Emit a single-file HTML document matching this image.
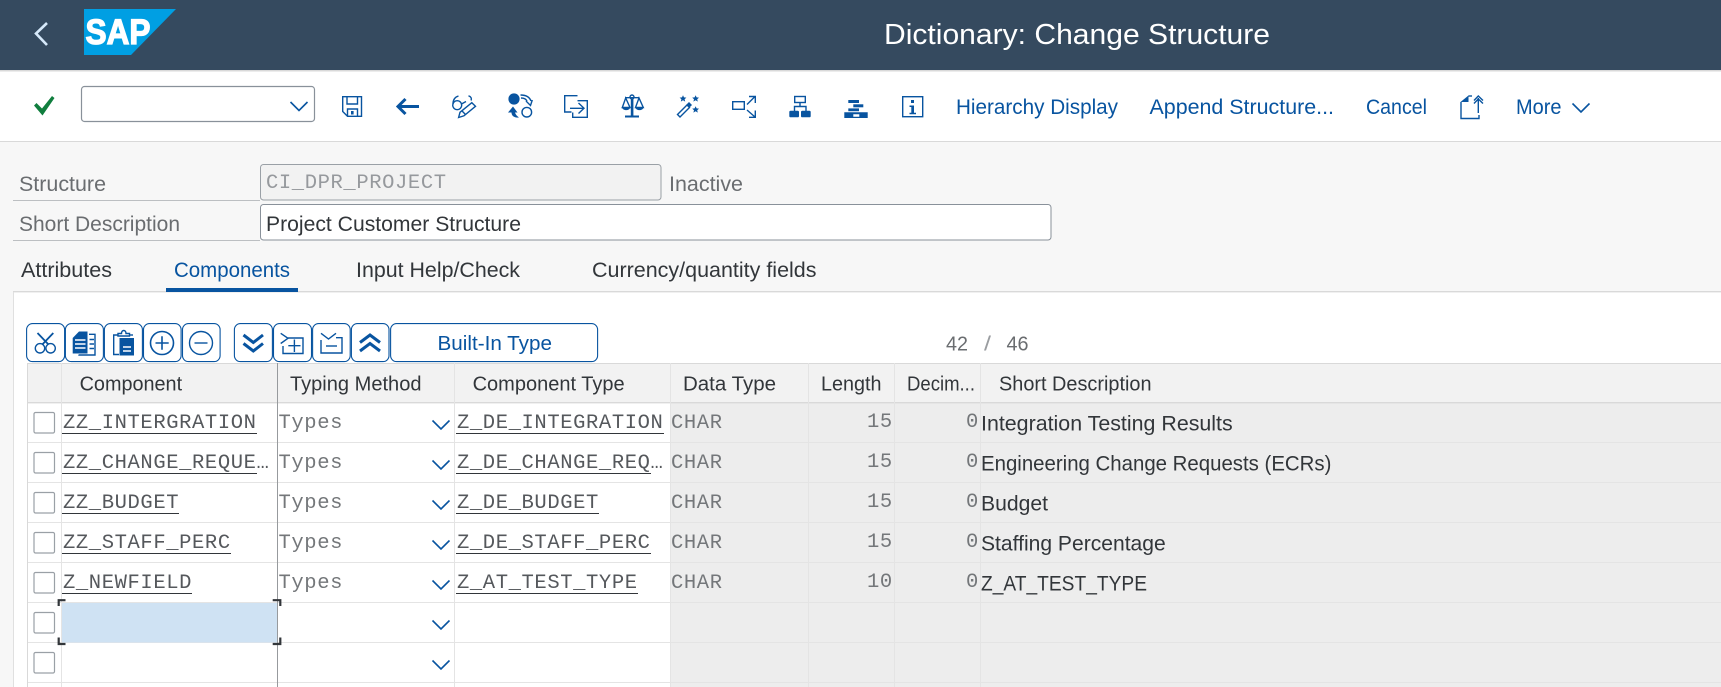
<!DOCTYPE html>
<html lang="en"><head><meta charset="utf-8"><title>Dictionary: Change Structure</title>
<style>
html,body{margin:0;padding:0;background:#f7f7f7;width:1721px;height:687px;overflow:hidden}
svg{display:block}
text{font-family:"Liberation Sans",sans-serif;font-size:21px;fill:#32363a;white-space:pre}
.m{font-family:"Liberation Mono",monospace;font-size:20.5px;letter-spacing:.6px;fill:#55585c}
.g{fill:#6a6d70}
.n{fill:#74777a}
.b{fill:#0854a0}
.h{font-size:20.5px}
.i{fill:none;stroke:#0854a0;stroke-width:1.4}
.f{fill:#0854a0}
.c{fill:none;stroke:#0854a0;stroke-width:1.6}
.k{fill:#fff;stroke:#9aa0a6;stroke-width:1.2}
.u{fill:#32363a}
</style></head><body>
<svg width="1721" height="687" viewBox="0 0 1721 687" xmlns="http://www.w3.org/2000/svg">
<rect width="1721" height="687" fill="#f7f7f7"/>
<!-- shell -->
<rect width="1721" height="70" fill="#354a5f"/>
<rect y="70" width="1721" height="1.5" fill="#d9d9d9"/>
<path d="M47 23L36 33.5L47 45" fill="none" stroke="#d6e9fa" stroke-width="2.6"/>
<polygon points="84,9 176,9 131,55 84,55" fill="#009fe3"/>
<text x="85.5" y="44" style="font-size:35px;font-weight:bold;fill:#fff;stroke:#fff;stroke-width:1.3" textLength="65" lengthAdjust="spacingAndGlyphs">SAP</text>
<text x="884" y="44" style="font-size:28.5px;fill:#fff" textLength="386" lengthAdjust="spacingAndGlyphs">Dictionary: Change Structure</text>
<!-- toolbar -->
<rect y="71.5" width="1721" height="69.5" fill="#fff"/>
<rect y="141" width="1721" height="1" fill="#d9d9d9"/>
<path d="M34 105.5L36.5 103L42 108.5L52 96L54.5 98L42.5 115.5Z" fill="#107e3e"/>
<rect x="81.5" y="86.5" width="233" height="35" rx="3" fill="#fff" stroke="#89919a" stroke-width="1.2"/>
<path d="M290.5 102L299 110.5L307.5 102" class="c"/>
<!-- save -->
<path class="i" d="M342.7 96.7H361.5V116.3H347.5L342.7 111.5Z"/>
<path class="i" d="M347 97V104H357.5V97M347.5 116V109H357.5V116"/>
<rect x="351" y="111" width="2.6" height="3.5" class="f"/>
<!-- back -->
<path d="M398 106.5H419M405.5 99L398 106.5L405.5 114" fill="none" stroke="#0854a0" stroke-width="3"/>
<!-- glasses pencil -->
<circle cx="457.2" cy="105.2" r="4.5" class="i"/><path class="i" d="M453 104C453 99.5 455 97 458.5 96M461.5 104L466 101.5M471 100.5C472 98.5 471 96.5 468.5 95.8"/>
<path class="i" d="M458.6 117.5L460 112.3L471.8 102.7L475.5 106.3L464 115.8Z"/><path class="i" d="M461.8 110.8L465.5 114.5"/>
<!-- swap -->
<circle cx="514" cy="99" r="5.6" class="f"/>
<path class="i" d="M520.5 95C526 95 529.5 97 531 101M526 101L530.5 105.5L532.3 100M521 98C524 98 526 99 527 101"/>
<circle cx="526.8" cy="112.2" r="4.8" class="i"/>
<path class="f" d="M508 112.5L513 106.5L517.5 112.5L515 112.5C515.5 114.5 517 116 519 117.5C514.5 118 511.5 116 511.5 112.5Z"/>
<!-- doc arrow -->
<path class="i" d="M577.5 95.7H564.7V112H571.5M572.7 112.5V117.3H587.3V100.7H577.5"/>
<path class="i" stroke-width="1.6" d="M570 108.3H583.5M578.5 103L584 108.3L578.5 113.5"/>
<!-- scales -->
<circle cx="632" cy="97" r="2" class="i"/>
<rect x="630.8" y="99" width="2.6" height="17" class="f"/><rect x="625" y="115.5" width="14" height="2" class="f"/>
<path class="i" d="M625 97.7H639M625.7 98L622.3 107.5H630ZM639 98L635.5 107.5H643.3Z"/>
<path class="f" d="M622 107.5H630.2C629.5 111 623 111 622 107.5ZM635.3 107.5H643.5C642.8 111 636.3 111 635.3 107.5Z"/>
<!-- wand -->
<path class="f" d="M683 95.2l1 2.2 2.4.2-1.8 1.6.6 2.4-2.2-1.3-2.2 1.3.6-2.4-1.8-1.6 2.4-.2ZM695.6 95.2l1 2.2 2.4.2-1.8 1.6.6 2.4-2.2-1.3-2.2 1.3.6-2.4-1.8-1.6 2.4-.2ZM695.6 106.2l1 2.2 2.4.2-1.8 1.6.6 2.4-2.2-1.3-2.2 1.3.6-2.4-1.8-1.6 2.4-.2Z"/>
<path class="i" d="M677.5 114.5L687 105L689.5 107.5L680 117Z"/>
<path class="f" d="M686.5 104.5L689 102L692 105L689.5 107.5Z"/>
<!-- shuffle -->
<rect x="732.7" y="101.7" width="11.6" height="7.6" class="i"/>
<path class="i" d="M747 104.5L755 96.5M749 96.5H755.3V103M747 110L755 117M755.3 110.5V117.3H749" stroke-width="1.5"/>
<!-- hierarchy -->
<rect x="794.7" y="96.5" width="10.6" height="6" class="i"/>
<path class="i" d="M800 102.5V106.5M794.5 111V106.5H806V111"/>
<rect x="789.3" y="110.7" width="9.7" height="6.6" rx="1.3" class="f"/><rect x="801" y="110.7" width="9.7" height="6.6" rx="1.3" class="f"/>
<!-- stack -->
<rect x="848.3" y="100" width="10.7" height="3" class="f"/><rect x="853.3" y="104.3" width="10" height="3" class="f"/><rect x="848.3" y="108.4" width="10.7" height="2.8" class="f"/>
<path class="f" fill-rule="evenodd" d="M844.3 112.3H867.7V118H844.3ZM853.3 114.3V116.8H859.3V114.3Z"/>
<!-- info -->
<rect x="902.7" y="96.7" width="20" height="20" class="i"/>
<rect x="911" y="100" width="3" height="3" class="f"/><path class="f" d="M909.5 105.5H914V112.8H916V114.3H909.5V112.8H911.3V107H909.5Z"/>
<text x="956" y="114" class="b" textLength="162" lengthAdjust="spacingAndGlyphs">Hierarchy Display</text>
<text x="1149.5" y="114" class="b" textLength="184.5" lengthAdjust="spacingAndGlyphs">Append Structure...</text>
<text x="1366" y="114" class="b" textLength="61" lengthAdjust="spacingAndGlyphs">Cancel</text>
<!-- upload -->
<path class="i" d="M1461 102V118.5H1479V115"/><path class="f" d="M1460.5 102L1468.5 95.5V102Z"/><path class="i" d="M1468.5 96H1472"/>
<path class="i" d="M1478.3 98V113M1474 100.5L1478.3 96L1483 100.5M1474 103.5L1478.3 99L1483 103.5"/>
<text x="1516" y="114" class="b" textLength="45.5" lengthAdjust="spacingAndGlyphs">More</text>
<path d="M1572.5 103.5L1581 112L1589.5 103.5" class="c"/>
<!-- form -->
<text x="19" y="191" class="g" textLength="87" lengthAdjust="spacingAndGlyphs">Structure</text>
<rect x="13" y="200" width="247" height="1" fill="#bcbfc2"/>
<rect x="260.5" y="164.5" width="400.5" height="35.5" rx="3" fill="#f2f2f2" stroke="#9aa0a6"/>
<text x="266" y="188" class="m" style="fill:#96999d">CI_DPR_PROJECT</text>
<text x="669" y="191" class="g" textLength="74" lengthAdjust="spacingAndGlyphs">Inactive</text>
<text x="19" y="231" class="g" textLength="161" lengthAdjust="spacingAndGlyphs">Short Description</text>
<rect x="13" y="240" width="247" height="1" fill="#bcbfc2"/>
<rect x="260.5" y="204.5" width="790.5" height="35.5" rx="3" fill="#fff" stroke="#89919a"/>
<text x="266" y="231" textLength="255" lengthAdjust="spacingAndGlyphs">Project Customer Structure</text>
<!-- tabs -->
<text x="21" y="277" textLength="91" lengthAdjust="spacingAndGlyphs">Attributes</text>
<text x="174" y="277" class="b" textLength="116" lengthAdjust="spacingAndGlyphs">Components</text>
<text x="356" y="277" textLength="164" lengthAdjust="spacingAndGlyphs">Input Help/Check</text>
<text x="592" y="277" textLength="224.5" lengthAdjust="spacingAndGlyphs">Currency/quantity fields</text>
<rect x="13" y="292" width="1708" height="395" fill="#fff"/>
<rect x="13" y="291" width="1708" height="1.4" fill="#d9d9d9"/>
<rect x="13" y="292" width="1" height="395" fill="#e0e0e0"/>
<rect x="166" y="288" width="132" height="4" fill="#0854a0"/>
<!-- table buttons -->
<g fill="#fff" stroke="#0854a0" stroke-width="1.1">
<rect x="26.6" y="323.6" width="38" height="38" rx="6"/><rect x="65.4" y="323.6" width="38" height="38" rx="6"/><rect x="104.4" y="323.6" width="38" height="38" rx="6"/><rect x="143.5" y="323.6" width="37.6" height="38" rx="6"/><rect x="182.5" y="323.6" width="37.6" height="38" rx="6"/>
<rect x="234.4" y="323.6" width="38" height="38" rx="6"/><rect x="273.5" y="323.6" width="38" height="38" rx="6"/><rect x="312.6" y="323.6" width="37.6" height="38" rx="6"/><rect x="351.4" y="323.6" width="37.6" height="38" rx="6"/><rect x="390.6" y="323.6" width="207" height="38" rx="6"/>
</g>
<!-- scissors -->
<circle cx="40" cy="348.3" r="4.7" class="i"/><circle cx="50.6" cy="348.3" r="4.7" class="i"/>
<path d="M37.5 333L48.5 344.5M53.3 333L42.3 344.5" fill="none" stroke="#0854a0" stroke-width="1.8"/>
<!-- copy -->
<path class="f" d="M72.7 338L79 331.5H87.5V353.5H72.7Z"/><path d="M75 340H85.5M75 344H85.5M75 348H85.5" stroke="#fff" stroke-width="1.6"/>
<path class="i" d="M89 334.3H95V355H79V354.5" stroke-width="1.3"/><path d="M89.5 339.5H94M89.5 344H94M89.5 348.5H94" stroke="#0854a0" stroke-width="1.5"/>
<!-- paste -->
<path class="i" d="M118 335H113.7V354.5H119"/><path class="i" d="M118 336V333.5H121.5C121.5 329.5 126 329.5 126 333.5H129.5V336H118Z"/>
<path class="i" d="M130 335H133"/><path class="f" d="M119.5 338H134V355.5H119.5Z"/><path d="M123 347H131M123 351H131" stroke="#fff" stroke-width="1.5"/>
<!-- plus / minus -->
<circle cx="162" cy="343" r="11.5" class="c"/><path class="c" d="M155.5 343H168.7M162 336.3V349.7"/>
<circle cx="201" cy="343" r="11.5" class="i"/><path class="i" d="M194.5 343H207.5"/>
<!-- double down -->
<path d="M243.5 335L253.3 342.5L263 335M243.5 343.5L253.3 351L263 343.5" fill="none" stroke="#0854a0" stroke-width="3"/>
<!-- add block -->
<path class="i" d="M280.7 333.3L288 338.3L280.7 343.5"/><path class="i" d="M288 338H303V353.5H283V346"/><path class="i" d="M288.3 345.7H300.5M294.4 339.5V352"/>
<!-- select block -->
<path class="i" d="M321 333.3L328.5 339L336 333.3"/><path class="i" d="M321 340V353H342V337.7H336"/><path class="i" d="M326 346H337"/>
<!-- double up -->
<path d="M360 342.5L370 335L380 342.5M360 351L370 343.5L380 351" fill="none" stroke="#0854a0" stroke-width="3"/>
<text x="437.5" y="350" class="b" style="font-size:20px" textLength="114.5" lengthAdjust="spacingAndGlyphs">Built-In Type</text>
<text x="946" y="350.5" class="g" style="font-size:20px" textLength="22" lengthAdjust="spacingAndGlyphs">42</text>
<text x="984" y="350.5" style="font-size:20px;fill:#9a9da0" textLength="7" lengthAdjust="spacingAndGlyphs">/</text>
<text x="1006.5" y="350.5" class="g" style="font-size:20px" textLength="22" lengthAdjust="spacingAndGlyphs">46</text>
<!-- table grid -->
<rect x="27" y="363" width="1694" height="39" fill="#f2f2f2"/>
<rect x="670" y="402" width="1051" height="285" fill="#ededed"/>
<rect x="27" y="363" width="1694" height="1" fill="#d9d9d9"/>
<g fill="#e4e4e4">
<rect x="27" y="402" width="1694" height="1.4" fill="#d9d9d9"/>
<rect x="27" y="442" width="1694" height="1"/><rect x="27" y="482" width="1694" height="1"/><rect x="27" y="522" width="1694" height="1"/><rect x="27" y="562" width="1694" height="1"/><rect x="27" y="602" width="1694" height="1"/><rect x="27" y="642" width="1694" height="1"/><rect x="27" y="682" width="1694" height="1"/>
<rect x="27" y="363" width="1" height="324" fill="#d9d9d9"/><rect x="61" y="363" width="1" height="324"/><rect x="454" y="363" width="1" height="324"/><rect x="670" y="363" width="1" height="324"/><rect x="808" y="363" width="1" height="324"/><rect x="894" y="363" width="1" height="324"/><rect x="980" y="363" width="1" height="324"/>
</g>
<rect x="62" y="603" width="215.5" height="39.5" fill="#cfe2f3"/>
<rect x="277" y="363" width="1" height="324" fill="#979a9d"/>
<path d="M65.5 600.2H58.7V606M272.7 600.2H280.3V606M58.7 637.5V644H65.5M280.3 637.5V644H272.7" fill="none" stroke="#32363a" stroke-width="2.2"/>
<!-- headers -->
<text x="79.6" y="390.5" class="h" textLength="102.5" lengthAdjust="spacingAndGlyphs">Component</text>
<text x="290" y="390.5" class="h" textLength="131.5" lengthAdjust="spacingAndGlyphs">Typing Method</text>
<text x="472.6" y="390.5" class="h" textLength="152" lengthAdjust="spacingAndGlyphs">Component Type</text>
<text x="683" y="390.5" class="h" textLength="93" lengthAdjust="spacingAndGlyphs">Data Type</text>
<text x="821" y="390.5" class="h" textLength="60.5" lengthAdjust="spacingAndGlyphs">Length</text>
<text x="907" y="390.5" class="h" textLength="68" lengthAdjust="spacingAndGlyphs">Decim...</text>
<text x="999" y="390.5" class="h" textLength="152.5" lengthAdjust="spacingAndGlyphs">Short Description</text>
<!-- checkboxes -->
<rect class="k" x="34" y="412.5" width="20.5" height="20.5" rx="1.5"/><rect class="k" x="34" y="452.5" width="20.5" height="20.5" rx="1.5"/><rect class="k" x="34" y="492.5" width="20.5" height="20.5" rx="1.5"/><rect class="k" x="34" y="532.5" width="20.5" height="20.5" rx="1.5"/><rect class="k" x="34" y="572.5" width="20.5" height="20.5" rx="1.5"/><rect class="k" x="34" y="612.5" width="20.5" height="20.5" rx="1.5"/><rect class="k" x="34" y="652.5" width="20.5" height="20.5" rx="1.5"/>
<!-- chevrons -->
<path class="c" d="M432.5 420.5L441 429L449.5 420.5M432.5 460.5L441 469L449.5 460.5M432.5 500.5L441 509L449.5 500.5M432.5 540.5L441 549L449.5 540.5M432.5 580.5L441 589L449.5 580.5M432.5 620.5L441 629L449.5 620.5M432.5 660.5L441 669L449.5 660.5"/>
<!-- row 1 -->
<rect class="u" x="62" y="433" width="195" height="1"/><rect class="u" x="456" y="433" width="208" height="1"/>
<text x="63" y="428" class="m">ZZ_INTERGRATION</text><text x="278.5" y="428" class="m n">Types</text><text x="457" y="428" class="m">Z_DE_INTEGRATION</text><text x="671" y="428" class="m n">CHAR</text><text x="867" y="427" class="m n">15</text><text x="966" y="427" class="m n">0</text>
<text x="981" y="430.5" textLength="251.7" lengthAdjust="spacingAndGlyphs">Integration Testing Results</text>
<!-- row 2 -->
<rect class="u" x="62" y="473" width="195" height="1"/><rect class="u" x="456" y="473" width="195" height="1"/>
<text x="63" y="468" class="m">ZZ_CHANGE_REQUE…</text><text x="278.5" y="468" class="m n">Types</text><text x="457" y="468" class="m">Z_DE_CHANGE_REQ…</text><text x="671" y="468" class="m n">CHAR</text><text x="867" y="467" class="m n">15</text><text x="966" y="467" class="m n">0</text>
<text x="981" y="470.5" textLength="350.4" lengthAdjust="spacingAndGlyphs">Engineering Change Requests (ECRs)</text>
<!-- row 3 -->
<rect class="u" x="62" y="513" width="117" height="1"/><rect class="u" x="456" y="513" width="143" height="1"/>
<text x="63" y="508" class="m">ZZ_BUDGET</text><text x="278.5" y="508" class="m n">Types</text><text x="457" y="508" class="m">Z_DE_BUDGET</text><text x="671" y="508" class="m n">CHAR</text><text x="867" y="507" class="m n">15</text><text x="966" y="507" class="m n">0</text>
<text x="981" y="510.5" textLength="67" lengthAdjust="spacingAndGlyphs">Budget</text>
<!-- row 4 -->
<rect class="u" x="62" y="553" width="169" height="1"/><rect class="u" x="456" y="553" width="195" height="1"/>
<text x="63" y="548" class="m">ZZ_STAFF_PERC</text><text x="278.5" y="548" class="m n">Types</text><text x="457" y="548" class="m">Z_DE_STAFF_PERC</text><text x="671" y="548" class="m n">CHAR</text><text x="867" y="547" class="m n">15</text><text x="966" y="547" class="m n">0</text>
<text x="981" y="550.5" textLength="184.7" lengthAdjust="spacingAndGlyphs">Staffing Percentage</text>
<!-- row 5 -->
<rect class="u" x="62" y="593" width="130" height="1"/><rect class="u" x="456" y="593" width="182" height="1"/>
<text x="63" y="588" class="m">Z_NEWFIELD</text><text x="278.5" y="588" class="m n">Types</text><text x="457" y="588" class="m">Z_AT_TEST_TYPE</text><text x="671" y="588" class="m n">CHAR</text><text x="867" y="587" class="m n">10</text><text x="966" y="587" class="m n">0</text>
<text x="981" y="590.5" textLength="166" lengthAdjust="spacingAndGlyphs">Z_AT_TEST_TYPE</text>
</svg>
</body></html>
